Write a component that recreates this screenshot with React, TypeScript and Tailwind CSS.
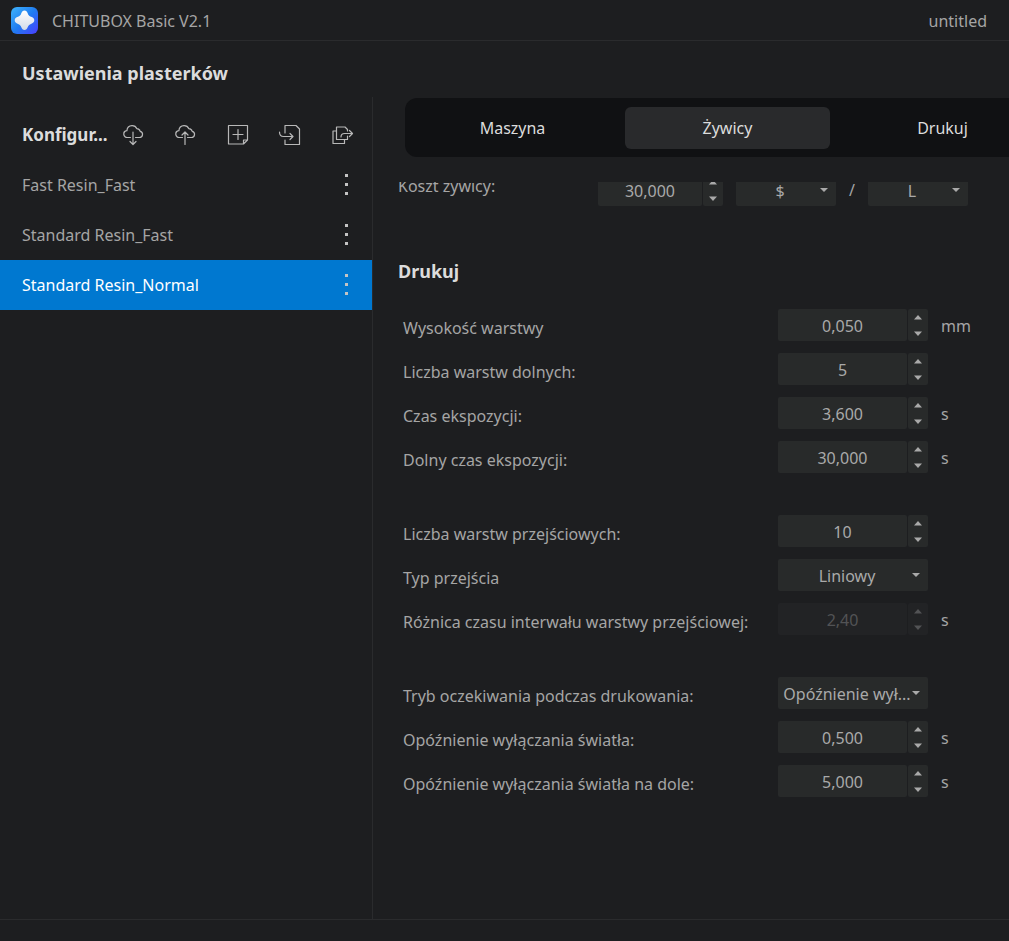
import { useState } from "react";
import type { ReactNode } from "react";
import clsx from "clsx";

const profiles = ["Fast Resin_Fast", "Standard Resin_Fast", "Standard Resin_Normal"];
const tabs = ["Maszyna", "Żywicy", "Drukuj"];

type Field = {
  id: string;
  label: string;
  value: string;
  unit?: string;
  type?: "number" | "select";
  disabled?: boolean;
};

const printGroups: Field[][] = [
  [
    { id: "layer-height", label: "Wysokość warstwy", value: "0,050", unit: "mm" },
    { id: "bottom-layers", label: "Liczba warstw dolnych:", value: "5" },
    { id: "exposure", label: "Czas ekspozycji:", value: "3,600", unit: "s" },
    { id: "bottom-exposure", label: "Dolny czas ekspozycji:", value: "30,000", unit: "s" },
  ],
  [
    { id: "transition-layers", label: "Liczba warstw przejściowych:", value: "10" },
    { id: "transition-type", label: "Typ przejścia", value: "Liniowy", type: "select" },
    {
      id: "transition-diff",
      label: "Różnica czasu interwału warstwy przejściowej:",
      value: "2,40",
      unit: "s",
      disabled: true,
    },
  ],
  [
    {
      id: "wait-mode",
      label: "Tryb oczekiwania podczas drukowania:",
      value: "Opóźnienie wył...",
      type: "select",
    },
    { id: "light-off", label: "Opóźnienie wyłączania światła:", value: "0,500", unit: "s" },
    {
      id: "bottom-light-off",
      label: "Opóźnienie wyłączania światła na dole:",
      value: "5,000",
      unit: "s",
    },
  ],
];

const Logo = () => (
  <svg viewBox="0 0 27 27" className="size-[27px]" aria-hidden="true">
    <defs>
      <linearGradient id="logo-bg" x1="0" y1="0" x2="1" y2="1">
        <stop offset="0" stopColor="#3fb4fb" />
        <stop offset="0.5" stopColor="#1f7cf0" />
        <stop offset="1" stopColor="#4a3dff" />
      </linearGradient>
      <linearGradient id="logo-star" x1="0" y1="0" x2="0" y2="1">
        <stop offset="0" stopColor="#ffffff" />
        <stop offset="1" stopColor="#d3dbe8" />
      </linearGradient>
    </defs>
    <rect width="27" height="27" rx="6" fill="url(#logo-bg)" />
    <path
      d="M13.5 3.5c1.600 0 2.600 1.200 3.300 3 .6 1.700 1.500 2.600 3.200 3.200 1.900.7 3.300 1.700 3.300 3.600s-1.400 2.900-3.300 3.600c-1.700.6-2.600 1.500-3.200 3.200-.7 1.800-1.700 3-3.300 3s-2.600-1.200-3.300-3c-.6-1.700-1.500-2.600-3.200-3.200-1.900-.7-3.300-1.700-3.300-3.600s1.400-2.900 3.300-3.600c1.700-.6 2.600-1.500 3.200-3.200.7-1.800 1.700-3 3.300-3z"
      fill="url(#logo-star)"
    />
  </svg>
);

const cloud =
  "M9.500 14.500H6.500a3.400 3.400 0 0 1-.600-6.800A5.400 5.400 0 0 1 11 2.700a5.200 5.200 0 0 1 4.900 3a3.700 3.700 0 0 1 3.300 2.700a3.100 3.100 0 0 1-.900 6.100H14.500";

const actions: { label: string; icon: ReactNode }[] = [
  { label: "Pobierz z chmury", icon: <path d={`${cloud}M12 9v12.500M9 18.500l3 3 3-3`} /> },
  { label: "Wyślij do chmury", icon: <path d={`${cloud}M12 21.500V9M9 12l3-3 3 3`} /> },
  {
    label: "Dodaj",
    icon: <path d="M2.500 2.500h19v14.500l-4 4h-15zM17.500 21v-4h4M12 6.500v10M7 11.500h10" />,
  },
  {
    label: "Importuj",
    icon: (
      <path d="M7 10V2.500h11l3.500 3.500v15.500H7v-4.500M1.500 9c0 3 1.200 4.500 4 4.500h9.500M12 10.500l3 3-3 3" />
    ),
  },
  {
    label: "Eksportuj",
    icon: (
      <path d="M17.500 8V6.500L15 4H6.500v12.500h11V13M6.500 8H3v12.500h11.500v-4M11 14c0-2.500 1-3.500 3.500-3.500h7.500M19.500 7.500l3 3-3 3" />
    ),
  },
];

const SpinArrow = ({ up }: { up?: boolean }) => (
  <svg viewBox="0 0 8 5" className="h-[5px] w-2 fill-current" aria-hidden="true">
    {up ? <path d="M0 4.500 4 0l4 4.500z" /> : <path d="M0 .5h8L4 5z" />}
  </svg>
);

const NumberField = ({
  id,
  value,
  className,
  disabled,
}: {
  id: string;
  value: string;
  className: string;
  disabled?: boolean;
}) => (
  <div
    className={clsx(
      "flex h-8 shrink-0 gap-px",
      className,
      disabled ? "text-[#525355]" : "text-[#a9a9a9]"
    )}
  >
    <input
      id={id}
      type="text"
      inputMode="decimal"
      defaultValue={value}
      disabled={disabled}
      className={clsx(
        "min-w-0 flex-1 rounded-xs pt-0.5 text-center outline-none",
        disabled ? "bg-[#222325]" : "bg-[#282a2a]"
      )}
    />
    <div
      className={clsx(
        "flex w-5 flex-col rounded-xs",
        disabled ? "bg-[#222325]" : "bg-[#282a2a]"
      )}
    >
      <button
        type="button"
        aria-label="Zwiększ"
        disabled={disabled}
        className="flex flex-1 items-center justify-center"
      >
        <SpinArrow up />
      </button>
      <button
        type="button"
        aria-label="Zmniejsz"
        disabled={disabled}
        className="flex flex-1 items-center justify-center"
      >
        <SpinArrow />
      </button>
    </div>
  </div>
);

const SelectField = ({
  id,
  value,
  className,
  label,
}: {
  id: string;
  value: string;
  className: string;
  label?: string;
}) => (
  <div className={clsx("relative h-8 shrink-0 text-[#a9a9a9]", className)}>
    <select
      id={id}
      aria-label={label}
      className="size-full appearance-none rounded-xs bg-[#282a2a] pt-0.5 pr-3 text-center outline-none"
    >
      <option>{value}</option>
    </select>
    <svg
      viewBox="0 0 8 4"
      className="pointer-events-none absolute top-3.5 right-2 h-1 w-2 fill-current"
      aria-hidden="true"
    >
      <path d="M0 0h8L4 4z" />
    </svg>
  </div>
);

const Sidebar = () => {
  const [selected, setSelected] = useState("Standard Resin_Normal");

  return (
    <aside className="w-[373px] shrink-0 border-r border-[#2a2b2d]">
      <div className="flex h-[63px] items-center pt-3 pr-[18px] pl-[22px]">
        <h2 className="w-[99px] text-[17px] font-bold text-[#dcdcdc]">Konfigur...</h2>
        <div className="flex flex-1 justify-between">
          {actions.map(({ label, icon }) => (
            <button key={label} type="button" aria-label={label} className="text-[#b8b8b8]">
              <svg
                viewBox="0 0 24 24"
                className="size-6 fill-none stroke-current stroke-[1.2]"
                strokeLinejoin="round"
                strokeLinecap="round"
              >
                {icon}
              </svg>
            </button>
          ))}
        </div>
      </div>
      <ul>
        {profiles.map((name) => (
          <li
            key={name}
            className={clsx(
              "flex h-[50px] items-center pr-4 pl-[22px]",
              name === selected ? "bg-[#0078d0] text-white" : "text-[#a5a5a5]"
            )}
          >
            <button
              type="button"
              onClick={() => setSelected(name)}
              className="h-full flex-1 text-left"
            >
              {name}
            </button>
            <button type="button" aria-label={`Opcje ${name}`}>
              <svg viewBox="0 0 19 22" className="h-[22px] w-[19px] fill-[#c4c4c4]">
                <path d="M8 0h3v3H8zM8 9h3v3H8zM8 18h3v3H8z" />
              </svg>
            </button>
          </li>
        ))}
      </ul>
    </aside>
  );
};

const ResinSettings = () => (
  <form className="flex-1 overflow-hidden pl-[25px]">
    {/* scrolled a little, so the first row is cut by the top edge */}
    <div className="-mt-2 flex h-8 items-center">
      <label htmlFor="resin-cost" className="w-[200px] shrink-0 pb-2">
        Koszt żywicy:
      </label>
      <NumberField id="resin-cost" value="30,000" className="w-[125px]" />
      <SelectField id="currency" label="Waluta" value="$" className="ml-[13px] w-[100px]" />
      <span className="w-8 shrink-0 text-center">/</span>
      <SelectField id="volume" label="Jednostka" value="L" className="w-[100px]" />
    </div>

    <h2 className="mt-[51px] text-lg leading-7 font-bold text-[#dcdcdc]">Drukuj</h2>

    <div className="mt-6 flex flex-col gap-[42px] pl-[5px]">
      {printGroups.map((group) => (
        <div key={group[0].id} className="flex flex-col gap-3">
          {group.map(({ id, label, value, unit, type, disabled }) => (
            <div key={id} className="flex h-8 items-center">
              <label htmlFor={id} className="w-[375px] shrink-0 pt-1.5 whitespace-nowrap">
                {label}
              </label>
              {type === "select" ? (
                <SelectField id={id} value={value} className="w-[150px]" />
              ) : (
                <NumberField id={id} value={value} disabled={disabled} className="w-[150px]" />
              )}
              {unit && <span className="pt-0.5 pl-[13px]">{unit}</span>}
            </div>
          ))}
        </div>
      ))}
    </div>
  </form>
);

export default function App() {
  const [tab, setTab] = useState("Żywicy");

  return (
    <div className="flex min-h-screen flex-col bg-[#1d1e20] font-['Noto_Sans','Open_Sans',sans-serif] text-base text-[#a5a5a5]">
      <header className="flex h-[41px] items-center border-b border-[#2a2b2d] pr-[22px] pl-[11px]">
        <Logo />
        <h1 className="ml-3.5 pt-0.5">CHITUBOX Basic V2.1</h1>
        <span className="ml-auto pt-0.5">untitled</span>
      </header>

      <h2 className="flex h-14 items-center px-[22px] pt-2 text-lg font-bold text-[#dcdcdc]">
        Ustawienia plasterków
      </h2>

      <div className="flex flex-1">
        <Sidebar />
        <main className="flex min-w-0 flex-1 flex-col overflow-hidden">
          <nav className="mt-px ml-8 flex h-[59px] min-w-[645px] items-center gap-2.5 rounded-xl bg-[#101113] px-[5px]">
            {tabs.map((name) => (
              <button
                key={name}
                type="button"
                onClick={() => setTab(name)}
                className={clsx(
                  "h-[42px] w-[205px] shrink-0 rounded-md text-[#dcdcdc]",
                  name === tab && "bg-[#292a2c]"
                )}
              >
                {name}
              </button>
            ))}
          </nav>
          <div className="mt-[25px] flex flex-1 flex-col">
            <ResinSettings />
          </div>
        </main>
      </div>

      <footer className="h-[22px] border-t border-[#2a2b2d]" />
    </div>
  );
}
